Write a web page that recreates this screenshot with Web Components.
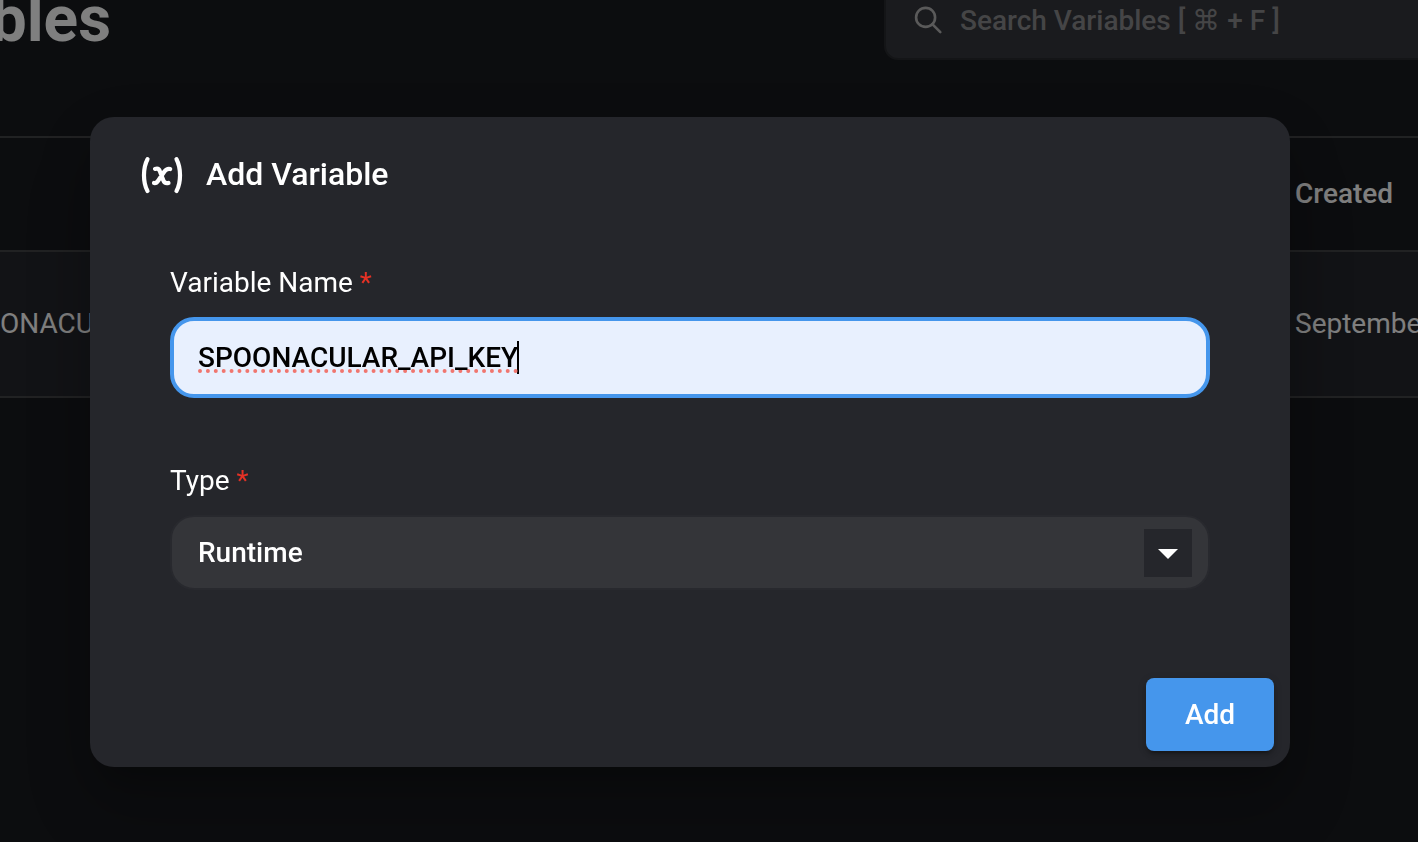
<!DOCTYPE html>
<html lang="en">
<head>
<meta charset="utf-8">
<meta name="viewport" content="width=device-width, initial-scale=1">
<title>Add Variable</title>
<style>
  html, body { margin: 0; height: 100%; }
  body { background: #181a1e; color: #fff; font: 400 28px/32px Roboto, "DejaVu Sans", sans-serif; overflow: hidden; }
</style>
</head>
<body>
<variables-page></variables-page>
<modal-dialog heading="Add Variable">
  <text-field label="Variable Name" value="SPOONACULAR_API_KEY"></text-field>
  <select-field label="Type"><option>Runtime</option></select-field>
  <action-button slot="actions">Add</action-button>
</modal-dialog>

<script>
const define = (name, html, setup) => {
  const template = document.createElement('template');
  template.innerHTML = html;
  customElements.define(name, class extends HTMLElement {
    connectedCallback() {
      if (this.shadowRoot) return;
      const root = this.attachShadow({ mode: 'open', delegatesFocus: true });
      root.append(template.content.cloneNode(true));
      if (setup) setup(this, root);
    }
  });
};

define('search-box', `
<style>
  :host { display: flex; align-items: center; gap: 15px; box-sizing: border-box; height: 60px; padding: 0 0 16px 27px;
    background: #34363c; border: 2px solid #282a2e; border-width: 0 0 2px 2px; border-radius: 0 0 0 14px; }
  svg { flex: none; width: 32px; height: 32px; }
  input { flex: 1; min-width: 0; height: 32px; padding: 0; border: 0; outline: 0; background: none; color: #fff; font: inherit; font-weight: 500; }
  input::placeholder { color: #8a8a8c; opacity: 1; }
</style>
<svg viewBox="0 0 32 32" fill="none" stroke="#b4b4b4" stroke-width="2.6" stroke-linecap="round"><circle cx="12.600" cy="12.400" r="9.500"/><path d="M19.300 19.200l8 8"/></svg>
<input type="search" aria-label="Search Variables" placeholder="Search Variables [ ⌘ + F ]">`);

define('variables-table', `
<style>
  :host { display: block; }
  table { width: 100%; table-layout: fixed; border-collapse: collapse; border-top: 2px solid #434446; }
  tr { border-bottom: 2px solid #434446; }
  th, td { padding: 0; text-align: left; white-space: nowrap; overflow: hidden; }
  th { height: 112px; font-weight: 500; }
  td { height: 144px; background: #24262c; }
  .created { width: 123px; }
</style>
<table>
  <thead><tr><th></th><th class="created">Created</th></tr></thead>
  <tbody><tr><td>ONACU</td><td>September</td></tr></tbody>
</table>`);

define('variables-page', `
<style>
  :host { display: block; }
  header { display: flex; justify-content: space-between; align-items: flex-start; margin-bottom: 76px; }
  h1 { display: flex; justify-content: flex-end; width: 111px; margin: 0; overflow: hidden; font-size: 64px; line-height: 40px; height: 56px; font-weight: 700; }
  search-box { width: 534px; }
</style>
<header><h1>bles</h1><search-box></search-box></header>
<variables-table></variables-table>`);

define('variable-icon', `
<style>:host { display: block; width: 48px; height: 48px; } svg { display: block; }</style>
<svg width="48" height="48" viewBox="0 0 48 48" fill="none" stroke="#fff" stroke-width="4.200" stroke-linecap="round" stroke-linejoin="round">
  <path d="M9.500 9.200C4.800 18 4.800 32.500 9.500 41M38.500 9.200c4.700 8.800 4.700 23.300 0 31.800"/>
  <path d="M17 18.900c2.600-.9 4.100 0 4.900 2.300l3.400 9c.9 2.500 2.400 3.500 5.200 2.800M32.200 19c-2.600-.7-4.200.3-5.800 2.500l-6.100 9c-1.400 2.200-2.400 2.900-4.300 2.500"/>
</svg>`);

define('modal-dialog', `
<style>
  :host { position: fixed; inset: 0; box-sizing: border-box; padding: 117px 128px 0 90px; background: rgba(0,0,0,.5); }
  section { background: #25262b; border-radius: 24px; box-shadow: 0 22px 30px -14px rgba(0,0,0,.2), 0 48px 76px 6px rgba(0,0,0,.14), 0 18px 60px 8px rgba(0,0,0,.12); }
  header { display: flex; align-items: center; gap: 20px; height: 50px; padding: 32px 48px 0; }
  h2 { margin: 0; font-size: 32px; line-height: 40px; font-weight: 500; }
  form { display: grid; gap: 67px; padding: 68px 80px 0; }
  footer { display: flex; justify-content: flex-end; padding: 88px 16px 16px; }
</style>
<section role="dialog" aria-modal="true" aria-labelledby="heading">
  <header><variable-icon></variable-icon><h2 id="heading"></h2></header>
  <form><slot></slot></form>
  <footer><slot name="actions"></slot></footer>
</section>`, (host, root) => {
  root.querySelector('h2').textContent = host.getAttribute('heading');
});

define('field-label', `
<style>:host { display: block; margin-bottom: 18px; } span { color: #e53125; }</style>
<slot></slot> <span aria-hidden="true">*</span>`);

define('text-field', `
<style>
  :host { display: block; }
  input { display: block; box-sizing: border-box; width: 100%; height: 81px; padding: 0 24px; border: 4px solid #4596ec; border-radius: 24px; outline: 0;
    background: linear-gradient(#000, #000) 343px 50% / 2px 33px no-repeat #e8f0fe; color: #000; caret-color: transparent; font: inherit; font-weight: 500;
    text-decoration: underline dotted #f0766f 4px; text-decoration-skip-ink: none; text-underline-offset: 2px; }
</style>
<label for="control"><field-label></field-label></label>
<input id="control" type="text" required spellcheck="false">`, (host, root) => {
  root.querySelector('field-label').textContent = host.getAttribute('label');
  const input = root.querySelector('input');
  input.value = host.getAttribute('value');
  input.focus();
  input.setSelectionRange(input.value.length, input.value.length);
});

define('select-field', `
<style>
  :host { display: block; }
  .box { display: grid; align-items: center; }
  .box > * { grid-area: 1 / 1; }
  select { appearance: none; width: 100%; height: 75px; padding: 0 80px 0 26px; border: 2px solid #28292e; border-radius: 24px; outline: 0; background: #343539; color: #fff; font: inherit; font-weight: 500; }
  .arrow { display: grid; place-items: center; justify-self: end; width: 48px; height: 48px; margin-right: 18px; background: #25262b; pointer-events: none; }
</style>
<label for="control"><field-label></field-label></label>
<div class="box">
  <select id="control" required></select>
  <span class="arrow"><svg width="20" height="12" viewBox="0 0 20 12"><path fill="#fff" d="M0 2h20L10 12z"/></svg></span>
</div>`, (host, root) => {
  root.querySelector('field-label').textContent = host.getAttribute('label');
  root.querySelector('select').append(...host.querySelectorAll('option'));
});

define('action-button', `
<style>
  :host { display: block; }
  button { display: block; min-width: 128px; height: 73px; padding: 0 32px; border: 0; border-radius: 8px; background: #4596ec; color: #fff; font: inherit; font-weight: 500;
    box-shadow: 0 6px 2px -4px rgba(0,0,0,.2), 0 4px 4px rgba(0,0,0,.14), 0 2px 10px rgba(0,0,0,.12); }
</style>
<button type="button"><slot></slot></button>`);
</script>
</body>
</html>
